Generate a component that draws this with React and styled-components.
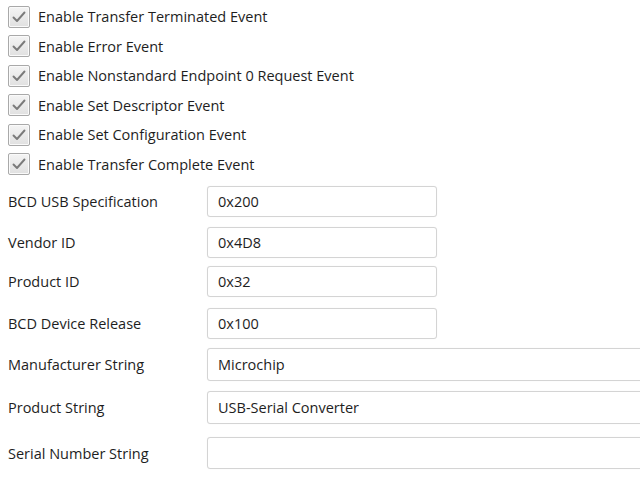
import React from "react";
import styled, { createGlobalStyle } from "styled-components";

const GlobalStyle = createGlobalStyle`
  html, body {
    margin: 0;
    padding: 0;
    background: #ffffff;
    overflow: hidden;
  }
  body {
    font-family: "Open Sans", "Noto Sans", sans-serif;
    font-size: 14.5px;
    color: #1e1e1e;
  }
`;

const Page = styled.div`
  width: 640px;
  height: 480px;
  overflow: hidden;
  padding: 2px 0 0 8px;
  box-sizing: border-box;
`;

const CheckList = styled.div`
  display: flex;
  flex-direction: column;
`;

const CheckRow = styled.label`
  display: flex;
  align-items: center;
  height: 29.5px;
  gap: 8px;
`;

const Box = styled.span`
  width: 22px;
  height: 22px;
  box-sizing: border-box;
  border: 1px solid #a9a9a9;
  border-radius: 2px;
  background: linear-gradient(180deg, #f4f4f4 0%, #e0e0e0 100%);
  box-shadow: inset 0 0 0 1px #fafafa;
  display: flex;
  align-items: center;
  justify-content: center;
`;

const CheckText = styled.span`
  font-size: 14.5px;
  color: #1e1e1e;
`;

const Form = styled.div`
  display: flex;
  flex-direction: column;
  margin-top: 7px;
`;

const FieldRow = styled.div`
  display: flex;
  align-items: center;
  margin-top: ${(p) => p.$gap}px;
`;

const FieldLabel = styled.div`
  width: 199px;
  flex: none;
  font-size: 14.5px;
  color: #1e1e1e;
`;

const Field = styled.div`
  flex: none;
  width: ${(p) => (p.$wide ? "460px" : "230px")};
  height: ${(p) => p.$h}px;
  box-sizing: border-box;
  border: 1px solid #d4d4d4;
  border-radius: 3px;
  background: #ffffff;
  box-shadow: 0 0 1px rgba(0, 0, 0, 0.08);
  padding: 0 10px;
  display: flex;
  align-items: center;
  font-size: 14.5px;
  color: #1e1e1e;
`;

const Tick = () => (
  <svg width="16" height="14" viewBox="0 0 16 14">
    <path
      d="M2.5 7.5 L6 11 L13.5 2.5"
      fill="none"
      stroke="#7a7a7a"
      strokeWidth="1.9"
      strokeLinecap="round"
      strokeLinejoin="round"
    />
  </svg>
);

const checks = [
  "Enable Transfer Terminated Event",
  "Enable Error Event",
  "Enable Nonstandard Endpoint 0 Request Event",
  "Enable Set Descriptor Event",
  "Enable Set Configuration Event",
  "Enable Transfer Complete Event",
];

const fields = [
  { label: "BCD USB Specification", value: "0x200", gap: 0, h: 31 },
  { label: "Vendor ID", value: "0x4D8", gap: 10, h: 31 },
  { label: "Product ID", value: "0x32", gap: 8, h: 31 },
  { label: "BCD Device Release", value: "0x100", gap: 11, h: 31 },
  { label: "Manufacturer String", value: "Microchip", gap: 9, h: 33, wide: true },
  { label: "Product String", value: "USB-Serial Converter", gap: 10, h: 33, wide: true },
  { label: "Serial Number String", value: "", gap: 13, h: 32, wide: true },
];

export default function App() {
  return (
    <Page>
      <GlobalStyle />
      <CheckList>
        {checks.map((c) => (
          <CheckRow key={c}>
            <Box>
              <Tick />
            </Box>
            <CheckText>{c}</CheckText>
          </CheckRow>
        ))}
      </CheckList>
      <Form>
        {fields.map((f) => (
          <FieldRow key={f.label} $gap={f.gap}>
            <FieldLabel>{f.label}</FieldLabel>
            <Field $wide={f.wide} $h={f.h}>
              {f.value}
            </Field>
          </FieldRow>
        ))}
      </Form>
    </Page>
  );
}
